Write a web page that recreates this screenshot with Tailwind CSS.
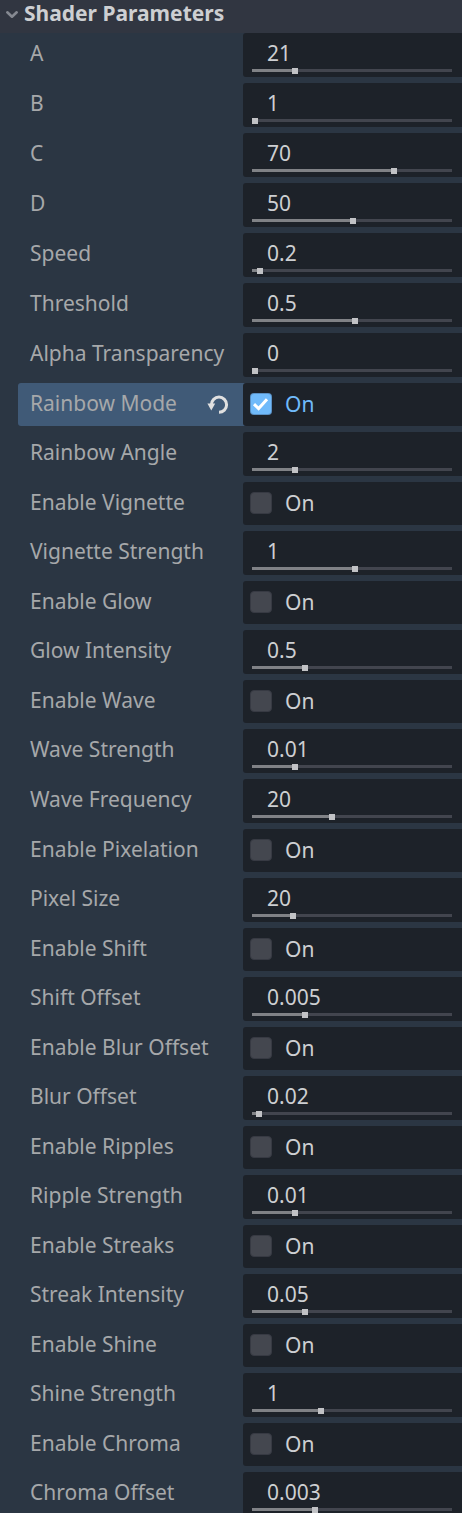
<!DOCTYPE html>
<html lang="en">
<head>
<meta charset="utf-8">
<title>Shader Parameters</title>
<script src="https://cdn.jsdelivr.net/npm/@tailwindcss/browser@4"></script>
</head>
<body class="w-[462px] h-[1513px] overflow-hidden bg-[#2b3643] font-['Noto_Sans',sans-serif] text-[21px] leading-7">
<header class="flex h-[33px] items-start bg-[#313641] pl-[5px]">
  <svg class="mt-[7px] h-4 w-[14px] shrink-0" viewBox="0 0 14 16" fill="none" stroke="#858991" stroke-width="2.6" stroke-linecap="round" stroke-linejoin="round"><path d="M2.3 5.3 7 9.7l4.7-4.4"/></svg>
  <h1 class="ml-[5px] -mt-[1px] font-bold whitespace-nowrap text-[#cdcfd2]">Shader Parameters</h1>
</header>
<main id="rows" class="flex flex-col gap-[6px]"></main>

<template id="slider">
  <div class="flex h-[44px] shrink-0 pl-[18px]">
    <div class="w-[225px] pl-3 pt-[6px] whitespace-nowrap text-[#a6a8aa]" data-label></div>
    <div class="flex-1 rounded-l-[3px] bg-[#1d2229] pl-[9px]">
      <div class="h-[36px] pl-[15px] pt-[6px] text-[#cdcfd2]" data-value></div>
      <div class="relative h-[3px] w-[200px] bg-[#42454e]">
        <div class="h-[3px] bg-[#808286]" data-fill></div>
        <div class="absolute -top-px size-[6px] bg-[#c1c2c5]" data-grabber></div>
      </div>
    </div>
  </div>
</template>
<template id="check">
  <div class="flex h-[43px] shrink-0 pl-[18px]">
    <div class="w-[225px] pl-3 pt-[6px] whitespace-nowrap text-[#a6a8aa]" data-label></div>
    <div class="flex flex-1 items-start rounded-l-[3px] bg-[#1d2229] pl-[7px]">
      <div class="mt-[10px] size-[22px] rounded-[4px] border border-[#373a43] bg-[#44474f]"></div>
      <div class="ml-[13px] pt-[7px] text-[#cdcfd2]">On</div>
    </div>
  </div>
</template>
<template id="checked">
  <div class="flex h-[43px] shrink-0 pl-[18px]">
    <div class="flex w-[225px] rounded-l-[3px] bg-[#405a77] pl-3 text-[#a6a8aa]">
      <div class="w-[175px] pt-[6px] whitespace-nowrap" data-label></div>
      <svg class="mt-[11px] size-[24px]" viewBox="0 0 24 24" fill="none"><path d="M6.4 10.7A7.6 7.6 0 1 1 14 18.3" stroke="#e0e0e0" stroke-width="3"/><path d="M2.4 9.6h7.8L6.3 16.4z" fill="#e0e0e0"/></svg>
    </div>
    <div class="flex-1 bg-[#405a77]">
      <div class="flex h-[43px] items-start rounded-l-[3px] bg-[#1d2229] pl-[7px]">
        <svg class="mt-[10px] size-[22px]" viewBox="0 0 22 22" fill="none"><rect width="22" height="22" rx="4" fill="#5b91c4"/><rect x="1" y="1" width="20" height="20" rx="3" fill="#70bafa"/><path d="M4 11.2 8.6 15.6 17 6.2" stroke="#fff" stroke-width="3"/></svg>
        <div class="ml-[13px] pt-[7px] text-[#70bafa]">On</div>
      </div>
    </div>
  </div>
</template>
<script>
// [label, value, grabber offset]; rows with a label only are checkboxes
const rows = [
  ["A","21",40],["B","1",0],["C","70",139],["D","50",98],["Speed","0.2",5],["Threshold","0.5",100],["Alpha Transparency","0",0],
  ["Rainbow Mode",true],["Rainbow Angle","2",40],["Enable Vignette"],["Vignette Strength","1",100],["Enable Glow"],["Glow Intensity","0.5",50],
  ["Enable Wave"],["Wave Strength","0.01",40],["Wave Frequency","20",77],["Enable Pixelation"],["Pixel Size","20",38],["Enable Shift"],["Shift Offset","0.005",50],
  ["Enable Blur Offset"],["Blur Offset","0.02",4],["Enable Ripples"],["Ripple Strength","0.01",40],["Enable Streaks"],["Streak Intensity","0.05",50],
  ["Enable Shine"],["Shine Strength","1",66],["Enable Chroma"],["Chroma Offset","0.003",60]
];
const host = document.getElementById("rows");
for (const [label, value, pos] of rows) {
  const id = value === true ? "checked" : value === undefined ? "check" : "slider";
  const n = document.getElementById(id).content.cloneNode(true);
  n.querySelector("[data-label]").textContent = label;
  if (id === "slider") {
    n.querySelector("[data-value]").textContent = value;
    n.querySelector("[data-fill]").style.width = pos + "px";
    n.querySelector("[data-grabber]").style.left = pos + "px";
  }
  host.append(n);
}
</script>
</body>
</html>
